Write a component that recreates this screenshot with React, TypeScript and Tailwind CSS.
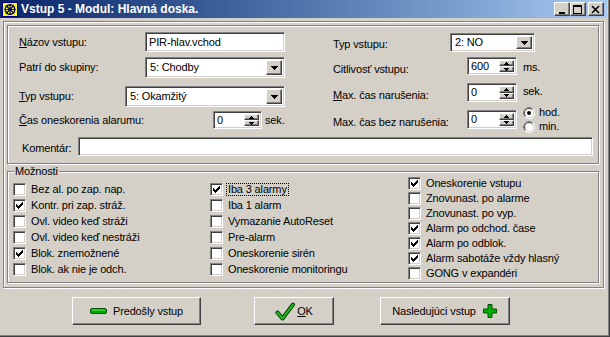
import React from 'react';

const RAISED = 'border border-t-white border-l-white border-r-[#404040] border-b-[#404040] shadow-[inset_-1px_-1px_0_#808080] bg-[#d4d0c8]';
const SUNKEN = 'border border-t-[#808080] border-l-[#808080] border-r-white border-b-white shadow-[inset_1px_1px_0_#404040,inset_-1px_-1px_0_#d4d0c8] bg-white';
const ETCHED = 'border border-[#808080] shadow-[inset_1px_1px_0_#fff,1px_1px_0_#fff]';

// pixel triangle, w = base width
function Tri({ w, up }: { w: number; up?: boolean }) {
  const rows = Math.ceil(w / 2);
  return (
    <svg width={w} height={rows} shapeRendering="crispEdges" className="block">
      {Array.from({ length: rows }).map((_, i) => (
        <rect key={i} x={i} y={up ? rows - 1 - i : i} width={w - 2 * i} height={1} fill="#000" />
      ))}
    </svg>
  );
}

function Check({ on, label, focus }: { on?: boolean; label: string; focus?: boolean }) {
  return (
    <div className="flex items-center">
      <span className={`${SUNKEN} w-[13px] h-[13px] shrink-0 flex items-center justify-center`}>
        {on && (
          <svg width="7" height="7" shapeRendering="crispEdges">
            {[2, 3, 4, 3, 2, 1, 0].map((y, x) => (
              <rect key={x} x={x} y={y} width={1} height={3} fill="#000" />
            ))}
          </svg>
        )}
      </span>
      <span className={`ml-[4px] px-[1px] ${focus ? 'outline-1 outline-dotted outline-black' : ''}`}>{label}</span>
    </div>
  );
}

function Radio({ on, label }: { on?: boolean; label: string }) {
  return (
    <div className="flex items-center h-[14px]">
      <svg width="12" height="12" className="shrink-0">
        <circle cx="6" cy="6" r="5.5" fill="#fff" />
        <path d="M9.9 2.1A5.5 5.5 0 0 0 2.1 9.9" stroke="#808080" fill="none" />
        <path d="M9.2 2.8A4.5 4.5 0 0 0 2.8 9.2" stroke="#404040" fill="none" />
        <path d="M9.9 2.1A5.5 5.5 0 0 1 2.1 9.9" stroke="#fff" fill="none" />
        <path d="M9.2 2.8A4.5 4.5 0 0 1 2.8 9.2" stroke="#d4d0c8" fill="none" />
        {on && <circle cx="6" cy="6" r="2" fill="#000" />}
      </svg>
      <span className="ml-[4px]">{label}</span>
    </div>
  );
}

function Combo({ value, w, h }: { value: string; w: number; h: number }) {
  return (
    <div className={`${SUNKEN} flex items-stretch p-[2px]`} style={{ width: w, height: h }}>
      <span className="flex-1 pl-[2px] flex items-center">{value}</span>
      <span className={`${RAISED} w-[16px] flex items-center justify-center`}>
        <Tri w={7} />
      </span>
    </div>
  );
}

function Spin({ value, w, h }: { value: string; w: number; h: number }) {
  return (
    <div className={`${SUNKEN} flex items-stretch p-[2px]`} style={{ width: w, height: h }}>
      <span className="flex-1 pl-[1px] flex items-center">{value}</span>
      <span className="w-[15px] flex flex-col">
        <span className={`${RAISED} flex-1 flex items-center justify-center`}><Tri w={5} up /></span>
        <span className={`${RAISED} flex-1 flex items-center justify-center`}><Tri w={5} /></span>
      </span>
    </div>
  );
}

function Edit({ value, w, h }: { value: string; w: number; h: number }) {
  return (
    <div className={`${SUNKEN} flex items-center pl-[3px]`} style={{ width: w, height: h }}>
      {value}
    </div>
  );
}

const COL1: [string, boolean][] = [
  ['Bez al. po zap. nap.', false],
  ['Kontr. pri zap. stráž.', true],
  ['Ovl. video keď stráži', false],
  ['Ovl. video keď nestráži', false],
  ['Blok. znemožnené', true],
  ['Blok. ak nie je odch.', false],
];
const COL2: [string, boolean][] = [
  ['Iba 3 alarmy', true],
  ['Iba 1 alarm', false],
  ['Vymazanie AutoReset', false],
  ['Pre-alarm', false],
  ['Oneskorenie sirén', false],
  ['Oneskorenie monitoringu', false],
];
const COL3: [string, boolean][] = [
  ['Oneskorenie vstupu', true],
  ['Znovunast. po alarme', false],
  ['Znovunast. po vyp.', false],
  ['Alarm po odchod. čase', true],
  ['Alarm po odblok.', true],
  ['Alarm sabotáže vždy hlasný', true],
  ['GONG v expandéri', false],
];

function TitleBtn({ kind }: { kind: 'min' | 'max' | 'close' }) {
  return (
    <span className={`${RAISED} w-[16px] h-[14px] flex items-center justify-center`}>
      <svg width="10" height="9" shapeRendering="crispEdges">
        {kind === 'min' && <rect x="2" y="7" width="6" height="2" fill="#000" />}
        {kind === 'max' && (
          <>
            <rect x="0.5" y="0.5" width="8" height="8" fill="none" stroke="#000" />
            <rect x="0" y="1" width="9" height="1" fill="#000" />
          </>
        )}
        {kind === 'close' && (
          <path d="M1 1L8 8M8 1L1 8" stroke="#000" strokeWidth="1.6" shapeRendering="auto" />
        )}
      </svg>
    </span>
  );
}

export default function App() {
  return (
    <div className="w-[610px] h-[337px] bg-[#d4d0c8] text-black text-[11px] leading-none tracking-[-0.15px] font-['Liberation_Sans',Arial,sans-serif] overflow-hidden flex flex-col shadow-[inset_-1px_-1px_0_#404040,inset_-2px_-2px_0_#808080]">
      {/* Title bar */}
      <div className="w-[607px] h-[18px] shrink-0 bg-linear-to-r from-[#0a246a] to-[#a6caf0] flex items-center pl-[2px] pr-[3px]">
        <svg width="16" height="15" className="shrink-0">
          <rect x="0" y="0" width="16" height="15" fill="#ffff00" />
          <rect x="0.5" y="0.5" width="15" height="14" fill="none" stroke="#000080" />
          <circle cx="8" cy="7.5" r="4.8" fill="none" stroke="#000080" strokeWidth="1.4" />
          <path d="M8 2v11M2.5 7.5h11M4 3.5l8 8M12 3.5l-8 8" stroke="#000080" strokeWidth="1.2" />
        </svg>
        <span className="ml-[3px] text-white font-bold text-[12px] tracking-normal">Vstup 5 - Modul: Hlavná doska.</span>
        <div className="ml-auto flex items-center">
          <TitleBtn kind="min" />
          <TitleBtn kind="max" />
          <span className="ml-[2px]"><TitleBtn kind="close" /></span>
        </div>
      </div>

      {/* Outer panel */}
      <div className={`${ETCHED} ml-[3px] mt-[3px] w-[601px] h-[267px] pl-[3px] pt-[3px]`}>
        {/* Upper panel */}
        <div className={`${ETCHED} w-[592px] h-[139px]`}>
          <div className="flex h-[111px]">
            <div className="w-[325px] pl-[11px]">
              <div className="flex items-center h-[20px] mt-[6px]">
                <span className="w-[126px]"><u>N</u>ázov vstupu:</span>
                <Edit value="PIR-hlav.vchod" w={140} h={20} />
              </div>
              <div className="flex items-center h-[21px] mt-[5px]">
                <span className="w-[126px]">Patrí do skupiny:</span>
                <Combo value="5: Chodby" w={140} h={21} />
              </div>
              <div className="flex items-center h-[21px] mt-[8px]">
                <span className="w-[106px]"><u>T</u>yp vstupu:</span>
                <Combo value="5: Okamžitý" w={160} h={21} />
              </div>
              <div className="flex items-center h-[18px] mt-[4px]">
                <span className="w-[194px]"><u>Č</u>as oneskorenia alarumu:</span>
                <Spin value="0" w={49} h={18} />
                <span className="ml-[3px]">sek.</span>
              </div>
            </div>
            <div className="flex-1">
              <div className="flex items-center h-[19px] mt-[7px]">
                <span className="w-[117px] mt-[4px]">Typ vstupu:</span>
                <Combo value="2: NO" w={85} h={19} />
              </div>
              <div className="flex items-center h-[18px] mt-[5px]">
                <span className="w-[134px] mt-[6px]">Citlivosť vstupu:</span>
                <Spin value="600" w={50} h={18} />
                <span className="ml-[6px] mt-[2px]">ms.</span>
              </div>
              <div className="flex items-center h-[19px] mt-[8px]">
                <span className="w-[134px] mt-[6px]"><u>M</u>ax. čas narušenia:</span>
                <Spin value="0" w={50} h={19} />
                <span className="ml-[6px] -mt-[2px]">sek.</span>
              </div>
              <div className="flex items-center h-[19px] mt-[8px]">
                <span className="w-[134px] mt-[6px]">Max. čas bez narušenia:</span>
                <Spin value="0" w={50} h={19} />
                <div className="ml-[6px] flex flex-col">
                  <Radio on label="hod." />
                  <Radio label="min." />
                </div>
              </div>
            </div>
          </div>
          <div className="flex items-center pl-[14px]">
            <span className="w-[56px] mt-[3px]">Komentár:</span>
            <Edit value="" w={515} h={19} />
          </div>
        </div>

        {/* Možnosti group */}
        <div className={`${ETCHED} relative mt-[7px] w-[592px] h-[112px] flex`}>
          <span className="absolute -top-[6px] left-[6px] bg-[#d4d0c8] px-[1px]">Možnosti</span>
          <div className="w-[202px] pl-[5px] pt-[9px] flex flex-col">
            {COL1.map(([t, on]) => (
              <div key={t} className="h-[16px] flex items-center"><Check on={on} label={t} /></div>
            ))}
          </div>
          <div className="w-[198px] pt-[9px] flex flex-col">
            {COL2.map(([t, on], i) => (
              <div key={t} className="h-[16px] flex items-center"><Check on={on} label={t} focus={i === 0} /></div>
            ))}
          </div>
          <div className="flex-1 pt-[4px] flex flex-col">
            {COL3.map(([t, on]) => (
              <div key={t} className="h-[15px] flex items-center"><Check on={on} label={t} /></div>
            ))}
          </div>
        </div>
      </div>

      {/* Buttons */}
      <div className="flex mt-[9px]">
        <button className={`${RAISED} ml-[72px] w-[129px] h-[28px] flex items-center justify-center gap-[6px]`}>
          <svg width="17" height="6">
            <rect x="0.5" y="0.5" width="16" height="5" rx="1.5" fill="#00b000" stroke="#005000" />
            <rect x="2" y="1.5" width="13" height="1" fill="#60e060" />
          </svg>
          <span>Predošly vstup</span>
        </button>
        <button className={`${RAISED} ml-[53px] w-[80px] h-[28px] flex items-center justify-center gap-[2px]`}>
          <svg width="20" height="19">
            <path d="M2.5 10.5L7.5 16.5L18 2.5" fill="none" stroke="#004000" strokeWidth="4" strokeLinejoin="round" strokeLinecap="round" />
            <path d="M2.5 10.5L7.5 16.5L18 2.5" fill="none" stroke="#20c020" strokeWidth="2" strokeLinejoin="round" strokeLinecap="round" />
          </svg>
          <span><u>O</u>K</span>
        </button>
        <button className={`${RAISED} ml-[46px] w-[130px] h-[28px] flex items-center justify-center gap-[6px]`}>
          <span>Nasledujúci vstup</span>
          <svg width="16" height="16">
            <path d="M6 1.5h4v4.5h4.5v4h-4.5v4.5h-4v-4.5h-4.5v-4h4.5z" fill="#00b000" stroke="#005000" />
          </svg>
        </button>
      </div>
    </div>
  );
}
